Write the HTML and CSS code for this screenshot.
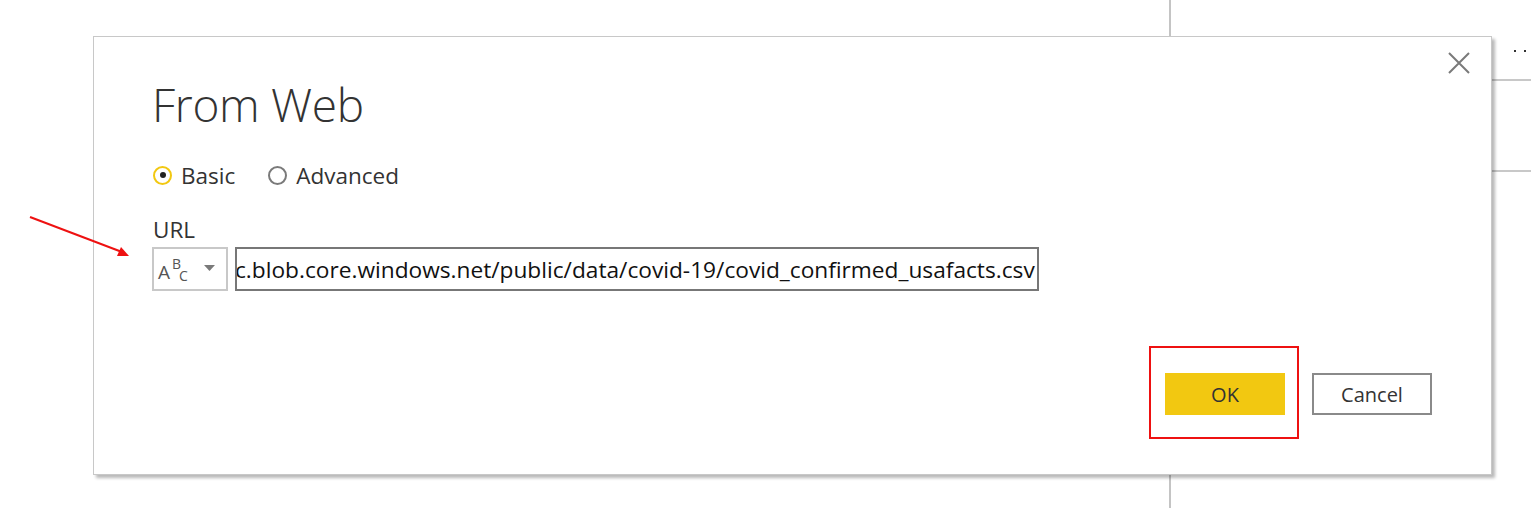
FILE: index.html
```html
<!DOCTYPE html>
<html>
<head>
<meta charset="utf-8">
<link rel="stylesheet" href="styles.css">
</head>
<body>
<div class="backdrop">
  <div class="bg-vline"></div>
  <div class="bg-hline bg-hline-1"></div>
  <div class="bg-hline bg-hline-2"></div>
  <div class="bg-dots"><span></span><span></span></div>
</div>
<div class="dialog">
  <button class="close" aria-label="Close">
    <svg width="22" height="22" viewBox="0 0 22 22"><path d="M1 1 L21 21 M21 1 L1 21" stroke="#7a7a7a" stroke-width="2" fill="none"/></svg>
  </button>
  <h1 class="title">From Web</h1>
  <div class="radios">
    <label class="radio"><span class="dot dot-on"></span><span>Basic</span></label>
    <label class="radio"><span class="dot"></span><span>Advanced</span></label>
  </div>
  <div class="field-label">URL</div>
  <div class="url-row">
    <div class="type-btn">
      <span class="abc"><span class="abc-a">A</span><span class="abc-b">B</span><span class="abc-c">C</span></span>
      <svg class="caret" width="11" height="6" viewBox="0 0 11 6"><path d="M0 0 L11 0 L5.5 6 Z" fill="#7a7a7a"/></svg>
    </div>
    <div class="url-input"><span>c.blob.core.windows.net/public/data/covid-19/covid_confirmed_usafacts.csv</span></div>
  </div>
  <div class="actions">
    <button class="btn btn-ok">OK</button>
    <button class="btn btn-cancel">Cancel</button>
    <div class="highlight"></div>
  </div>
</div>
<svg class="arrow" width="140" height="60" viewBox="0 0 140 60">
  <path d="M30 17 L122 52" stroke="#ee1111" stroke-width="2" fill="none"/>
  <path d="M129 56 L117 56 L121 47 Z" fill="#ee1111"/>
</svg>
</body>
</html>
```
FILE: styles.css
```css
html, body {
  margin: 0;
  padding: 0;
  background: #ffffff;
  width: 1531px;
  height: 508px;
  overflow: hidden;
}
body {
  position: relative;
  font-family: "Open Sans", "Noto Sans", sans-serif;
  color: #333333;
  padding: 36px 0 0 93px;
  box-sizing: border-box;
}
.backdrop {
  position: absolute;
  inset: 0;
}
.bg-vline {
  position: absolute;
  left: 1169px;
  top: 0;
  width: 2px;
  height: 508px;
  background: #c4c4c4;
}
.bg-hline {
  position: absolute;
  left: 1490px;
  right: 0;
  height: 2px;
  background: #c8c8c8;
}
.bg-hline-1 { top: 79px; }
.bg-hline-2 { top: 170px; }
.bg-dots {
  position: absolute;
  left: 1514px;
  top: 50px;
  display: flex;
  gap: 8px;
}
.bg-dots span {
  width: 2px;
  height: 2px;
  background: #333;
}
.dialog {
  position: relative;
  width: 1399px;
  height: 439px;
  box-sizing: border-box;
  background: #ffffff;
  border: 1px solid #c8c8c8;
  box-shadow: 3px 3px 3px rgba(0,0,0,0.28);
  padding: 0 0 0 59px;
  display: flex;
  flex-direction: column;
}
.close {
  position: absolute;
  right: 21px;
  top: 15px;
  border: 0;
  background: transparent;
  padding: 0;
  width: 22px;
  height: 22px;
  display: flex;
}
.title {
  margin: 36px 0 0 0;
  font-weight: 300;
  font-size: 46px;
  line-height: 62px;
  color: #333333;
  letter-spacing: -0.3px;
  margin-left: -1px;
}
.radios {
  display: flex;
  gap: 33px;
  margin-top: 24px;
  height: 32px;
  align-items: center;
}
.radio {
  display: flex;
  align-items: center;
  gap: 9px;
  font-size: 22.5px;
  color: #333;
}
.dot {
  width: 19px;
  height: 19px;
  box-sizing: border-box;
  border-radius: 50%;
  border: 2px solid #7a7a7a;
  display: flex;
  align-items: center;
  justify-content: center;
}
.dot-on {
  border: 2.5px solid #f2c811;
}
.dot-on::after {
  content: "";
  width: 6px;
  height: 6px;
  border-radius: 50%;
  background: #222;
}
.field-label {
  margin-top: 25px;
  font-size: 22.5px;
  line-height: 28px;
  color: #333;
}
.url-row {
  display: flex;
  gap: 7px;
  margin-top: 3px;
  height: 44px;
}
.type-btn {
  width: 76px;
  box-sizing: border-box;
  border: 2px solid #c8c8c8;
  display: flex;
  align-items: center;
  padding-left: 4px;
  gap: 15px;
  margin-left: -1px;
}
.abc {
  color: #555;
  line-height: 1;
  display: inline-flex;
  align-items: center;
  height: 30px;
  position: relative;
  width: 31px;
}
.abc-a {
  font-size: 19px;
  position: absolute;
  left: 0;
  top: 9px;
}
.abc-b {
  font-size: 14px;
  position: absolute;
  left: 14px;
  top: 3px;
}
.abc-c {
  font-size: 14px;
  position: absolute;
  left: 21px;
  top: 15px;
}
.caret {
  margin-top: -2px;
}
.url-input {
  width: 804px;
  box-sizing: border-box;
  border: 2px solid #777777;
  display: flex;
  align-items: center;
  overflow: hidden;
  white-space: nowrap;
  font-size: 22.7px;
  color: #111;
  padding-left: 0;
  letter-spacing: 0;
}
.url-input span {
  margin-left: -2px;
}
.actions {
  position: relative;
  display: flex;
  gap: 28px;
  margin-top: 82px;
  margin-left: 1012px;
}
.btn {
  width: 120px;
  height: 42px;
  box-sizing: border-box;
  font-family: "Open Sans", "Noto Sans", sans-serif;
  font-size: 20px;
  color: #333;
  padding: 0;
}
.btn-ok {
  background: #f2c811;
  border: 0;
}
.btn-cancel {
  background: #fff;
  border: 2px solid #8a8a8a;
  margin-left: -1px;
}
.highlight {
  position: absolute;
  left: -16px;
  top: -27px;
  width: 150px;
  height: 93px;
  box-sizing: border-box;
  border: 2px solid #ee1111;
}
.arrow {
  position: absolute;
  left: 0;
  top: 200px;
}
```
